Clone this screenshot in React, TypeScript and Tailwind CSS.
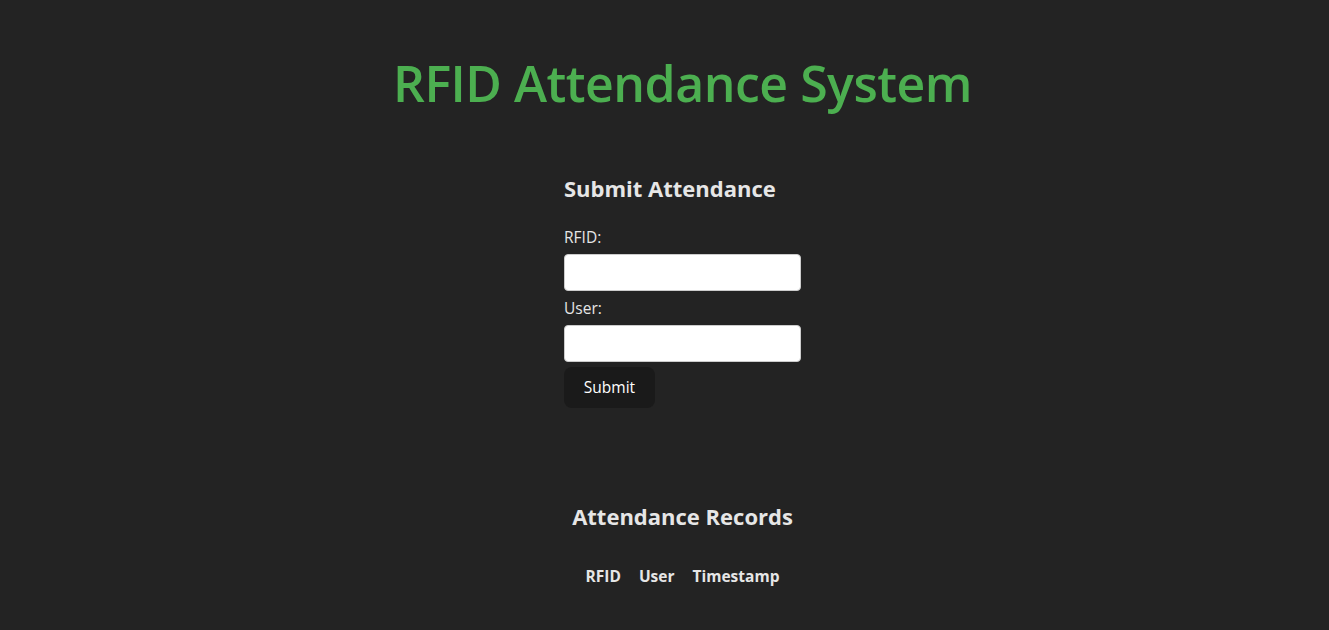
export default function App() {
  return (
    <div className="min-h-screen bg-[#232323] text-[#e6e6e6] font-['Open_Sans',sans-serif]">
      <div className="flex flex-col items-center pl-[36px]">
        <h1 className="mt-[50px] text-[50px] leading-[66px] font-semibold text-[#4caf50] tracking-[-0.5px]">
          RFID Attendance System
        </h1>

        {/* Submit form */}
        <form className="mt-[57px] w-[237px] flex flex-col" onSubmit={(e) => e.preventDefault()}>
          <h2 className="text-[22px] leading-[30px] font-bold">Submit Attendance</h2>
          <label className="mt-[23px] text-[15.5px] leading-[22px]">RFID:</label>
          <input className="mt-[6px] h-[37px] w-full rounded-[4px] border border-[#ccc] bg-white px-2 text-black" />
          <label className="mt-[6px] text-[15.5px] leading-[22px]">User:</label>
          <input className="mt-[6px] h-[37px] w-full rounded-[4px] border border-[#ccc] bg-white px-2 text-black" />
          <button className="mt-[5px] h-[41px] w-[91px] rounded-lg bg-[#1a1a1a] text-[15.5px] text-white">
            Submit
          </button>
        </form>

        {/* Records */}
        <h2 className="mt-[93px] text-[22px] leading-[30px] font-bold">Attendance Records</h2>
        <table className="mt-[34px] border-separate border-spacing-x-[12px]">
          <thead>
            <tr className="text-[15.5px] font-bold">
              <th className="px-[3px]">RFID</th>
              <th className="px-[3px]">User</th>
              <th className="px-[3px]">Timestamp</th>
            </tr>
          </thead>
          <tbody></tbody>
        </table>
      </div>
    </div>
  );
}
